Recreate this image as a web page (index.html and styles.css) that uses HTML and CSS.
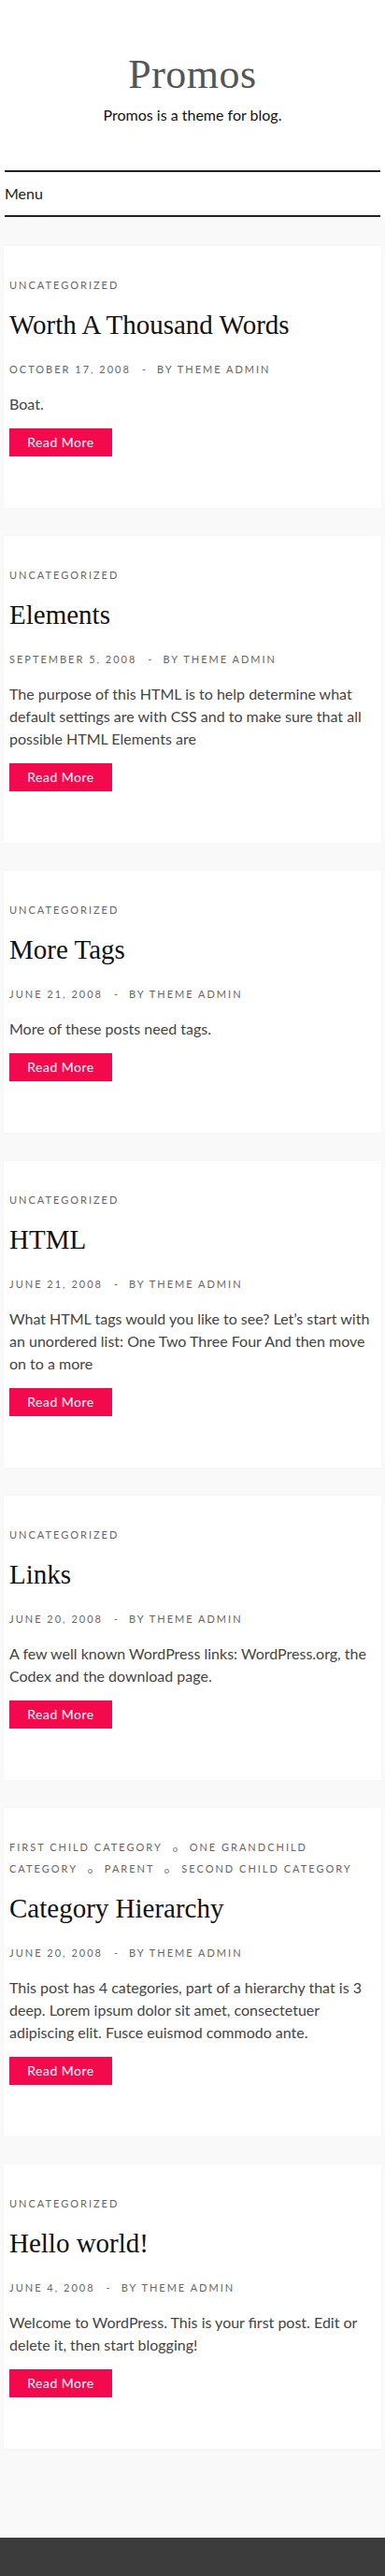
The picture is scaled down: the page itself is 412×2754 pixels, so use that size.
FILE: index.html
```html
<!DOCTYPE html>
<html lang="en">
<head>
<meta charset="utf-8">
<meta name="viewport" content="width=device-width, initial-scale=1">
<title>Promos</title>
<link rel="stylesheet" href="styles.css">
</head>
<body>
<header class="site-header">
  <h1 class="site-title">Promos</h1>
  <p class="site-desc">Promos is a theme for blog.</p>
</header>
<nav class="site-nav"><span class="menu-label">Menu</span></nav>
<main class="posts">
  <article class="card">
    <div class="cats">Uncategorized</div>
    <h2 class="title">Worth A Thousand Words</h2>
    <div class="meta">October 17, 2008<span class="dash">-</span>By Theme Admin</div>
    <p class="excerpt">Boat.</p>
    <div class="actions"><a class="btn" href="#">Read More</a></div>
  </article>
  <article class="card">
    <div class="cats">Uncategorized</div>
    <h2 class="title">Elements</h2>
    <div class="meta">September 5, 2008<span class="dash">-</span>By Theme Admin</div>
    <p class="excerpt">The purpose of this HTML is to help determine what default settings are with CSS and to make sure that all possible HTML Elements are</p>
    <div class="actions"><a class="btn" href="#">Read More</a></div>
  </article>
  <article class="card">
    <div class="cats">Uncategorized</div>
    <h2 class="title">More Tags</h2>
    <div class="meta">June 21, 2008<span class="dash">-</span>By Theme Admin</div>
    <p class="excerpt">More of these posts need tags.</p>
    <div class="actions"><a class="btn" href="#">Read More</a></div>
  </article>
  <article class="card">
    <div class="cats">Uncategorized</div>
    <h2 class="title">HTML</h2>
    <div class="meta">June 21, 2008<span class="dash">-</span>By Theme Admin</div>
    <p class="excerpt">What HTML tags would you like to see? Let’s start with an unordered list: One Two Three Four And then move on to a more</p>
    <div class="actions"><a class="btn" href="#">Read More</a></div>
  </article>
  <article class="card">
    <div class="cats">Uncategorized</div>
    <h2 class="title">Links</h2>
    <div class="meta">June 20, 2008<span class="dash">-</span>By Theme Admin</div>
    <p class="excerpt">A few well known WordPress links: WordPress.org, the Codex and the download page.</p>
    <div class="actions"><a class="btn" href="#">Read More</a></div>
  </article>
  <article class="card">
    <div class="cats"><span class="cat">First Child Category</span><span class="ring"></span> <span class="cat">One Grandchild</span> <span class="cat">Category</span><span class="ring"></span> <span class="cat">Parent</span><span class="ring"></span> <span class="cat">Second Child Category</span></div>
    <h2 class="title">Category Hierarchy</h2>
    <div class="meta">June 20, 2008<span class="dash">-</span>By Theme Admin</div>
    <p class="excerpt">This post has 4 categories, part of a hierarchy that is 3 deep. Lorem ipsum dolor sit amet, consectetuer adipiscing elit. Fusce euismod commodo ante.</p>
    <div class="actions"><a class="btn" href="#">Read More</a></div>
  </article>
  <article class="card">
    <div class="cats">Uncategorized</div>
    <h2 class="title">Hello world!</h2>
    <div class="meta">June 4, 2008<span class="dash">-</span>By Theme Admin</div>
    <p class="excerpt">Welcome to WordPress. This is your first post. Edit or delete it, then start blogging!</p>
    <div class="actions"><a class="btn" href="#">Read More</a></div>
  </article>
</main>
<footer class="site-footer"></footer>
</body>
</html>
```
FILE: styles.css
```css
* { box-sizing: border-box; }
html, body { margin: 0; padding: 0; }
body {
  background: #ffffff;
  font-family: Lato, "Open Sans", sans-serif;
  color: #444;
}
.site-header {
  padding-top: 54px;
  text-align: center;
}
.site-title {
  margin: 0;
  font-family: "Liberation Serif", serif;
  font-weight: 400;
  font-size: 44px;
  line-height: 52px;
  color: #555;
  letter-spacing: 0.5px;
}
.site-desc {
  margin: 5px 0 0;
  font-size: 16px;
  line-height: 24px;
  color: #111;
}
.site-nav {
  margin: 47px 5px 0;
  border-top: 2px solid #222;
  border-bottom: 2px solid #222;
  height: 50px;
  display: flex;
  align-items: center;
}
.menu-label {
  font-size: 16px;
  line-height: 46px;
  color: #222;
}
.posts {
  background: #f9f9f9;
  padding: 31px 4px 95px;
  display: flex;
  flex-direction: column;
  gap: 30px;
}
.card {
  background: #fff;
  padding: 30px 6px 55px;
  box-shadow: 0 0 3px rgba(0, 0, 0, 0.03);
}
.cats {
  font-size: 11px;
  line-height: 23px;
  letter-spacing: 2px;
  text-transform: uppercase;
  color: #666;
}
.ring {
  display: inline-block;
  width: 5px;
  height: 5px;
  border: 1px solid #777;
  border-radius: 50%;
  margin: 0 8px 0 11px;
  vertical-align: -1px;
}
.title {
  margin: 13px 0 0;
  font-family: "Liberation Serif", serif;
  font-weight: 400;
  font-size: 29px;
  line-height: 36px;
  color: #111;
}
.meta {
  margin-top: 20px;
  font-size: 11px;
  line-height: 20px;
  letter-spacing: 2px;
  text-transform: uppercase;
  color: #666;
}
.dash { margin: 0 10px 0 12px; }
.excerpt {
  margin: 15px 0 0;
  font-size: 16px;
  line-height: 24px;
  color: #444;
}
.actions {
  margin-top: 14px;
  height: 30px;
}
.btn {
  display: block;
  width: 110px;
  height: 30px;
  line-height: 30px;
  text-align: center;
  background: #f20a4c;
  color: #fff;
  font-size: 14px;
  letter-spacing: 0.5px;
  text-decoration: none;
}
.site-footer {
  background: #3c3c3c;
  height: 60px;
}
```
